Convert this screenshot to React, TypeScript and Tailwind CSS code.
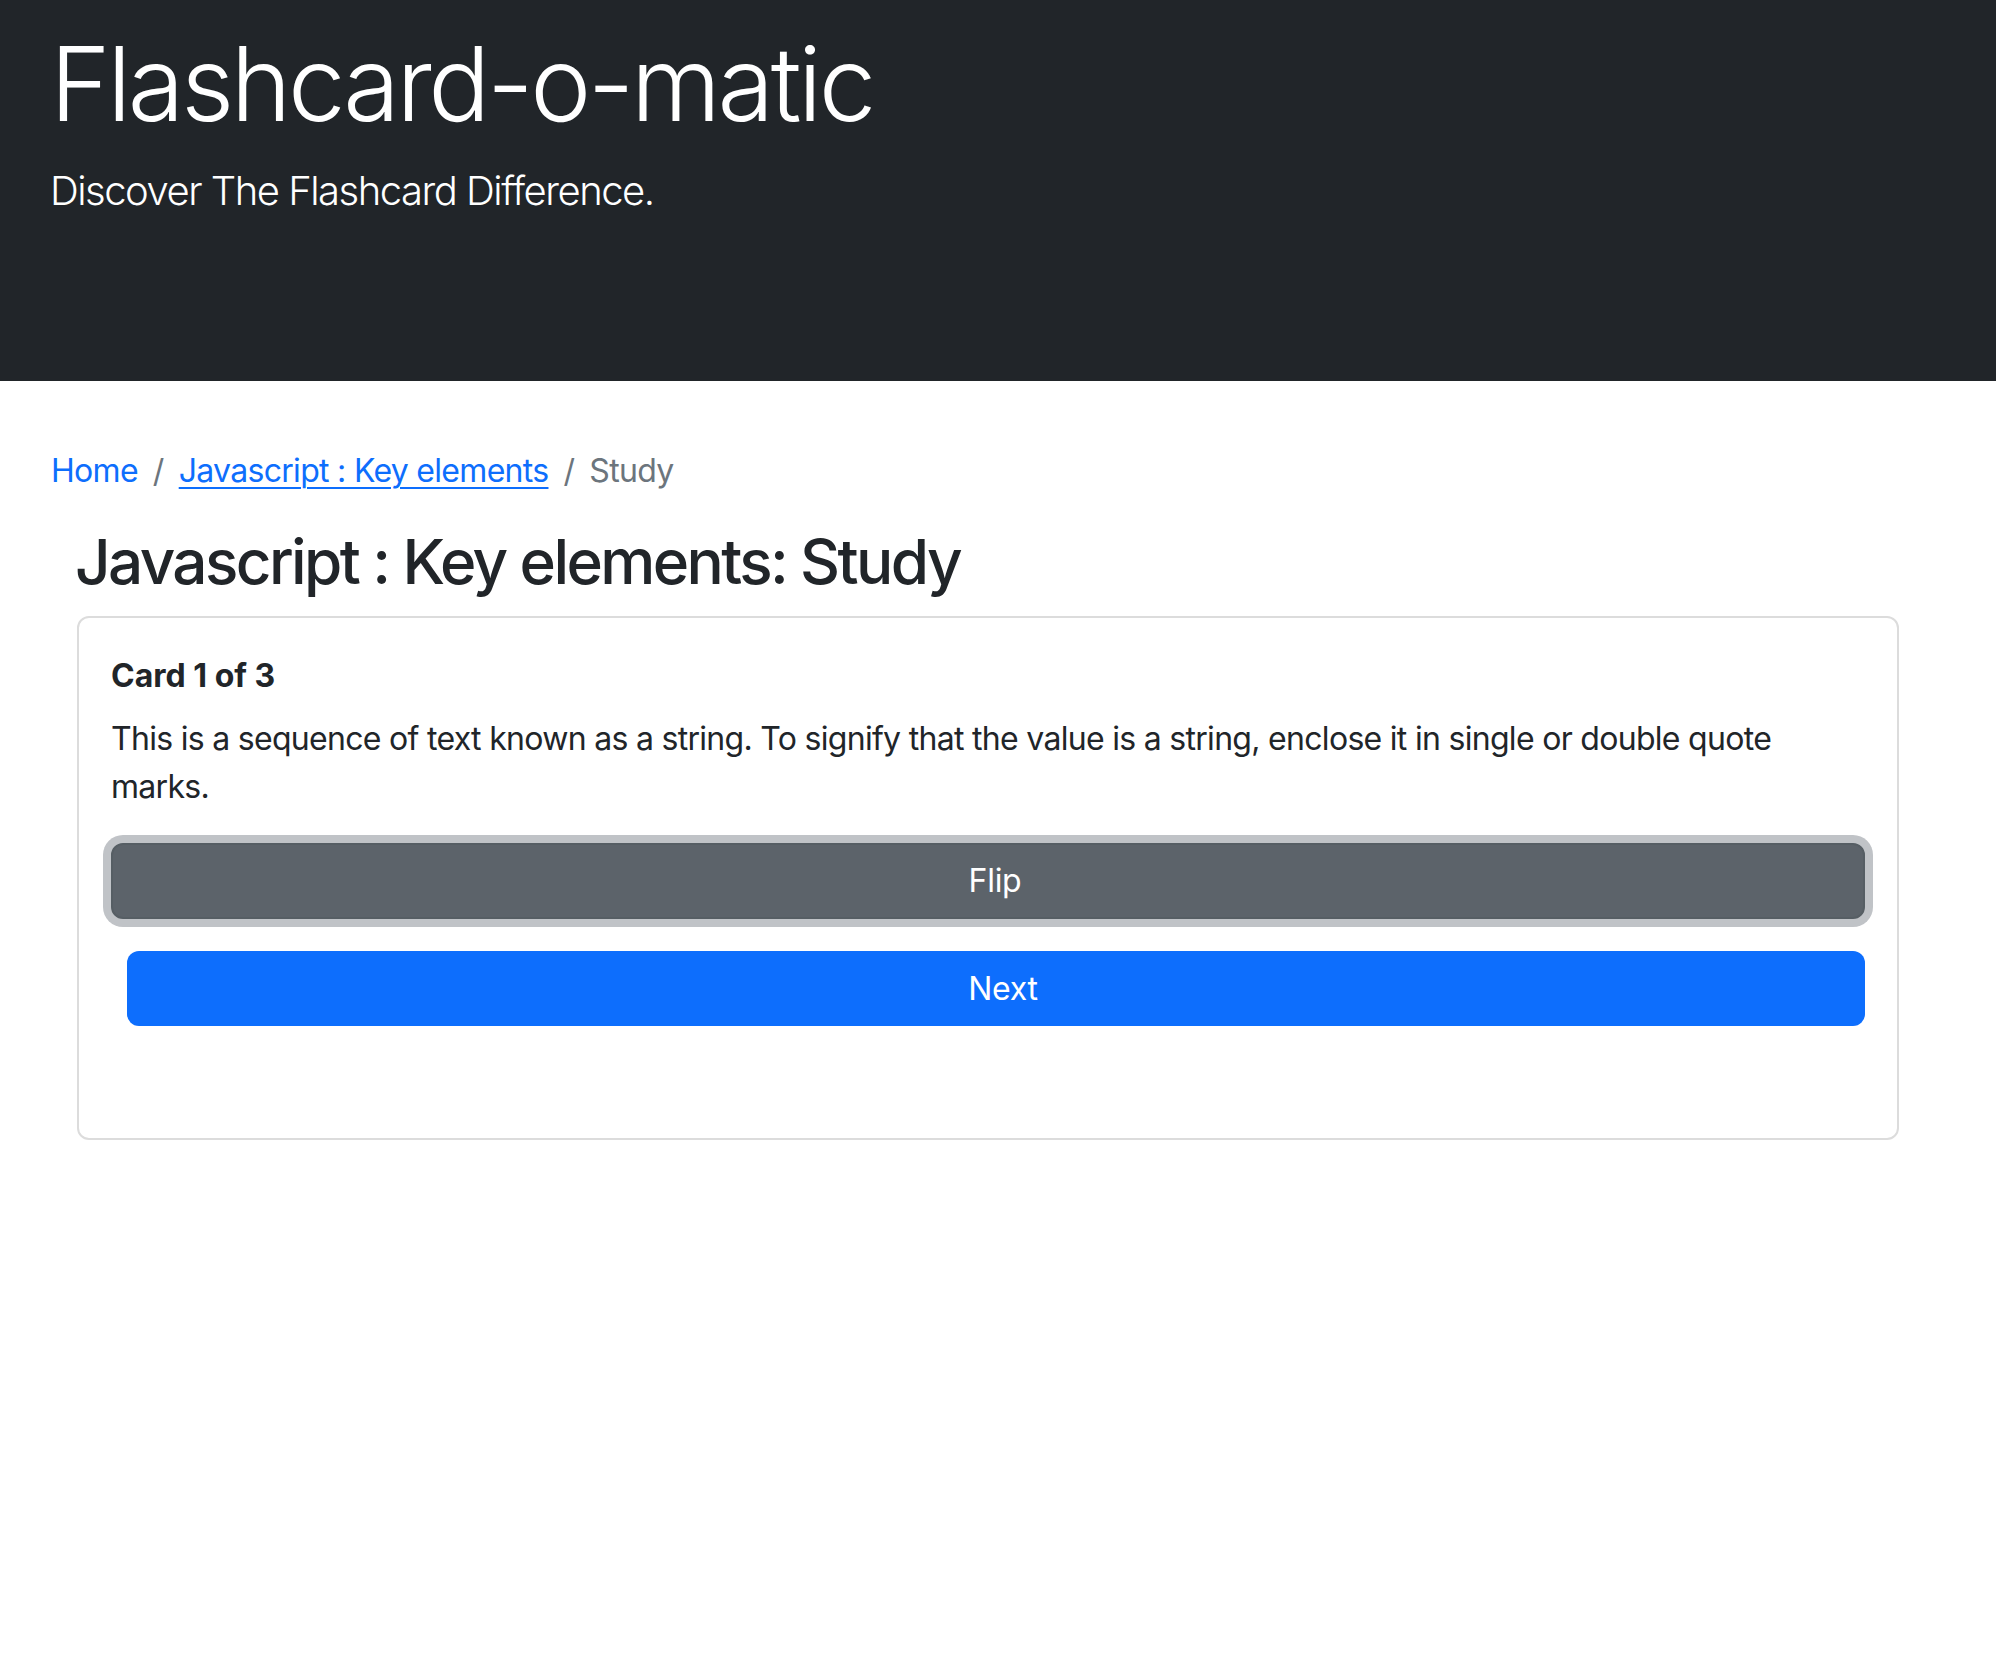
import { useState } from "react";

const cards = [
  {
    front:
      "This is a sequence of text known as a string. To signify that the value is a string, enclose it in single or double quote marks.",
  },
  { front: "" },
  { front: "" },
];

function Header() {
  return (
    <header className="h-[381px] bg-[#212529] pl-[50px] pt-[22px] text-white">
      <h1 className="text-[103px] font-light leading-[124px] tracking-[-3.4px]">
        Flashcard-o-matic
      </h1>
      <p className="mt-[15px] text-[40px] font-light leading-[60px] tracking-[-1.5px]">
        Discover The Flashcard Difference.
      </p>
    </header>
  );
}

function Breadcrumb() {
  return (
    <nav aria-label="breadcrumb" className="ml-[51px] mt-[66px]">
      <ol className="flex items-center text-[32px] leading-[48px] tracking-[-0.7px]">
        <li>
          <a href="#" className="text-[#0d6efd]">
            Home
          </a>
        </li>
        <li className="flex items-center">
          <span className="px-[15px] text-[#6c757d]">/</span>
          <a href="#" className="text-[#0d6efd] underline decoration-2 underline-offset-[5px]">
            Javascript : Key elements
          </a>
        </li>
        <li className="flex items-center text-[#6c757d]">
          <span className="px-[15px]">/</span>
          <span>Study</span>
        </li>
      </ol>
    </nav>
  );
}

export default function App() {
  const [index, setIndex] = useState(0);
  const [flipped, setFlipped] = useState(false);
  const card = cards[index];

  return (
    <div className="min-h-[1672px] bg-white font-['Inter',sans-serif] text-[#212529]">
      <Header />
      <Breadcrumb />
      <main className="ml-[77px] w-[1822px]">
        <h2 className="-ml-[2px] mt-[30px] text-[62px] font-medium leading-[74px] tracking-[-2.6px]">
          Javascript : Key elements: Study
        </h2>
        <div className="mt-[17px] rounded-[12px] border-2 border-[#dcdcdc] px-[32px] pb-[112px] pt-[35px]">
          <h5 className="text-[32px] font-bold leading-[45px]">
            Card {index + 1} of {cards.length}
          </h5>
          <p className="mt-[17px] text-[32px] leading-[48px] tracking-[-0.7px]">
            {flipped ? "" : card.front}
          </p>
          <button
            type="button"
            onClick={() => setFlipped((f) => !f)}
            className="mt-[32px] block h-[76px] w-full rounded-[12px] border-2 border-[#565e64] bg-[#5c636a] pl-[14px] text-[32px] leading-[48px] tracking-[-0.3px] text-white shadow-[0_0_0_8px_#c0c3c7]"
          >
            Flip
          </button>
          <button
            type="button"
            onClick={() => {
              setIndex((i) => (i + 1) % cards.length);
              setFlipped(false);
            }}
            className="ml-[16px] mt-[32px] block h-[75px] w-[calc(100%-16px)] rounded-[12px] bg-[#0d6efd] pl-[14px] text-[32px] leading-[48px] tracking-[-0.3px] text-white"
          >
            Next
          </button>
        </div>
      </main>
    </div>
  );
}
